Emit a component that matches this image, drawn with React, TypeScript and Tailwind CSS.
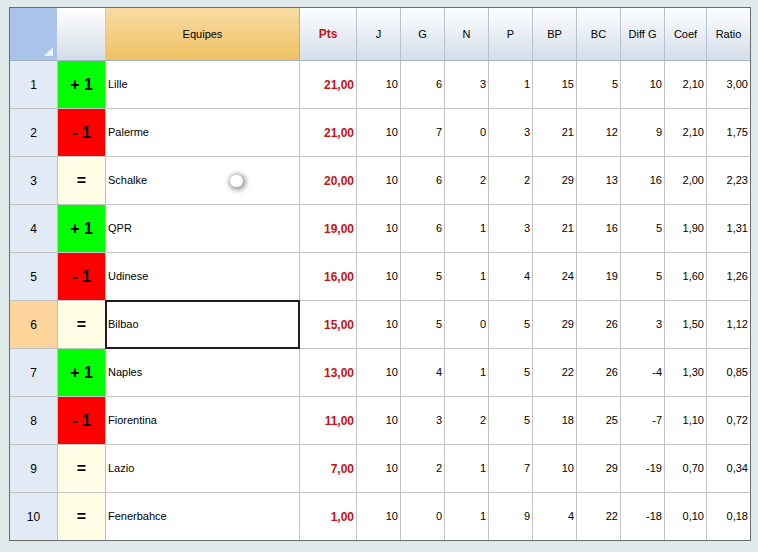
const rows = [
  { n: 1, trend: "+ 1", team: "Lille", pts: "21,00", j: 10, g: 6, nul: 3, p: 1, bp: 15, bc: 5, diff: 10, coef: "2,10", ratio: "3,00" },
  { n: 2, trend: "- 1", team: "Palerme", pts: "21,00", j: 10, g: 7, nul: 0, p: 3, bp: 21, bc: 12, diff: 9, coef: "2,10", ratio: "1,75" },
  { n: 3, trend: "=", team: "Schalke", pts: "20,00", j: 10, g: 6, nul: 2, p: 2, bp: 29, bc: 13, diff: 16, coef: "2,00", ratio: "2,23" },
  { n: 4, trend: "+ 1", team: "QPR", pts: "19,00", j: 10, g: 6, nul: 1, p: 3, bp: 21, bc: 16, diff: 5, coef: "1,90", ratio: "1,31" },
  { n: 5, trend: "- 1", team: "Udinese", pts: "16,00", j: 10, g: 5, nul: 1, p: 4, bp: 24, bc: 19, diff: 5, coef: "1,60", ratio: "1,26" },
  { n: 6, trend: "=", team: "Bilbao", pts: "15,00", j: 10, g: 5, nul: 0, p: 5, bp: 29, bc: 26, diff: 3, coef: "1,50", ratio: "1,12" },
  { n: 7, trend: "+ 1", team: "Naples", pts: "13,00", j: 10, g: 4, nul: 1, p: 5, bp: 22, bc: 26, diff: -4, coef: "1,30", ratio: "0,85" },
  { n: 8, trend: "- 1", team: "Fiorentina", pts: "11,00", j: 10, g: 3, nul: 2, p: 5, bp: 18, bc: 25, diff: -7, coef: "1,10", ratio: "0,72" },
  { n: 9, trend: "=", team: "Lazio", pts: "7,00", j: 10, g: 2, nul: 1, p: 7, bp: 10, bc: 29, diff: -19, coef: "0,70", ratio: "0,34" },
  { n: 10, trend: "=", team: "Fenerbahce", pts: "1,00", j: 10, g: 0, nul: 1, p: 9, bp: 4, bc: 22, diff: -18, coef: "0,10", ratio: "0,18" },
];

const numCols = [
  { key: "j", label: "J", w: "w-[44px]" },
  { key: "g", label: "G", w: "w-[44px]" },
  { key: "nul", label: "N", w: "w-[44px]" },
  { key: "p", label: "P", w: "w-[44px]" },
  { key: "bp", label: "BP", w: "w-[44px]" },
  { key: "bc", label: "BC", w: "w-[44px]" },
  { key: "diff", label: "Diff G", w: "w-[44px]" },
  { key: "coef", label: "Coef", w: "w-[42px]" },
  { key: "ratio", label: "Ratio", w: "w-[43px]" },
] as const;

const trendBg = (t: string) =>
  t === "+ 1" ? "bg-[#00ff00]" : t === "- 1" ? "bg-[#ff0000]" : "bg-[#fffde6]";

const App = () => {
  return (
    <div className="h-[552px] w-[758px] bg-[#dfe9ea] pl-[9px] pt-[7px] font-['Liberation_Sans',Arial,sans-serif] text-[11px] text-black">
      <div className="relative w-[742px] border border-[#6b6b6b] bg-white">
        {/* header */}
        <div className="flex h-[53px] border-b border-[#a3b3c6]">
          <div className="relative w-[47px] bg-[#a9c4e8]">
            <svg className="absolute bottom-[4px] right-[4px]" width="9" height="9" viewBox="0 0 9 9">
              <polygon points="9,0 9,9 0,9" fill="#eef3fa" />
            </svg>
          </div>
          <div className="w-[49px] border-r border-[#c2ccd8] bg-gradient-to-b from-[#ffffff] to-[#d3dce8]" />
          <div className="flex w-[194px] items-center justify-center border-r border-[#d9a860] bg-gradient-to-b from-[#f8dca2] to-[#efc062]">
            Equipes
          </div>
          <div className="flex w-[57px] items-center justify-center border-r border-[#b6c2d0] bg-gradient-to-b from-[#fdfeff] to-[#d4deea] text-[12px] font-bold text-[#cc1111]">
            Pts
          </div>
          {numCols.map((c, i) => (
            <div
              key={c.key}
              className={`flex ${c.w} items-center justify-center bg-gradient-to-b from-[#fdfeff] to-[#d4deea] ${
                i < numCols.length - 1 ? "border-r border-[#b6c2d0]" : ""
              }`}
            >
              {c.label}
            </div>
          ))}
        </div>

        {/* rows */}
        {rows.map((r, idx) => {
          const last = idx === rows.length - 1;
          const sel = r.n === 6;
          return (
            <div key={r.n} className={`flex ${last ? "h-[47px]" : "h-[48px] border-b border-[#c3c3c3]"}`}>
              <div
                className={`flex w-[47px] items-center justify-center text-[12px] ${
                  sel ? "bg-[#fdd49b]" : "bg-[#e2eaf6]"
                }`}
              >
                {r.n}
              </div>
              <div
                className={`flex w-[49px] items-center justify-center border-l border-r border-[#b7c3b7] text-[16px] font-bold ${trendBg(
                  r.trend
                )}`}
              >
                {r.trend}
              </div>
              <div className="relative flex w-[194px] items-center border-r border-[#c3c3c3] pl-[2px]">
                {r.team}
                {sel && (
                  <div className="absolute -bottom-[1px] -left-[1px] -right-[1px] -top-[1px] border-2 border-[#1e1e1e]" />
                )}
              </div>
              <div className="flex w-[57px] items-center justify-end border-r border-[#c3c3c3] pr-[2px] text-[12px] font-bold text-[#cc1111]">
                {r.pts}
              </div>
              {numCols.map((c, i) => (
                <div
                  key={c.key}
                  className={`flex ${c.w} items-center justify-end pr-[2px] ${
                    i < numCols.length - 1 ? "border-r border-[#c3c3c3]" : ""
                  }`}
                >
                  {r[c.key]}
                </div>
              ))}
            </div>
          );
        })}

        {/* mouse cursor blob */}
        <div className="absolute left-[220px] top-[167px] h-[12px] w-[13px] rounded-full bg-white shadow-[1px_1px_5px_2px_rgba(0,0,0,0.4)]" />
      </div>
    </div>
  );
};

export default App;
